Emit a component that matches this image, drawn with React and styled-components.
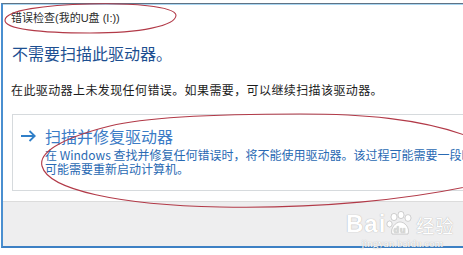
import styled, { createGlobalStyle } from 'styled-components';

const GlobalStyle = createGlobalStyle`
  html, body {
    margin: 0;
    padding: 0;
    background: #ffffff;
    overflow: hidden;
  }
  body {
    font-family: "Noto Sans", "Noto Sans CJK SC", sans-serif;
  }
`;

const Page = styled.div`
  position: relative;
  width: 463px;
  height: 255px;
  overflow: hidden;
  background: #ffffff;
`;

const Window = styled.div`
  margin: 3px 0 0 1px;
  width: 540px;
  height: 242px;
  display: flex;
  flex-direction: column;
  border-top: 1px solid #5f7386;
  border-left: 2px solid #4a8fd0;
  border-bottom: 2px solid #3d80c4;
  box-shadow: inset 0 1px 0 #a9d6f2;
  background: #ffffff;
`;

const Content = styled.div`
  flex: 1;
  display: flex;
  flex-direction: column;
  padding: 6px 0 0 8px;
`;

const Title = styled.div`
  font-size: 11px;
  line-height: 16px;
  color: #2a2a2a;
  font-family: "Liberation Sans", "Noto Sans CJK SC", sans-serif;
`;

const Heading = styled.div`
  margin-top: 16px;
  margin-left: 1px;
  font-size: 16px;
  line-height: 22px;
  color: #1d4f91;
  font-family: "Noto Sans CJK SC", sans-serif;
`;

const Body = styled.div`
  margin-top: 17px;
  font-size: 12px;
  line-height: 18px;
  letter-spacing: 0.4px;
  color: #1c1c1c;
  font-family: "Noto Sans CJK SC", sans-serif;
`;

const Card = styled.div`
  margin: 15px 0 0 1px;
  height: 77px;
  border: 1px solid #d6dadd;
  border-right: none;
  padding: 11px 0 0 7px;
  display: grid;
  grid-template-columns: 16px 1fr;
  column-gap: 9px;
  box-sizing: border-box;
`;

const ArrowBox = styled.div`
  height: 20px;
  display: flex;
  align-items: center;
`;

const CardText = styled.div`
  display: flex;
  flex-direction: column;
  font-family: "Noto Sans CJK SC", sans-serif;
`;

const CardTitle = styled.div`
  font-size: 16px;
  line-height: 20px;
  color: #3b7cc6;
`;

const CardLine = styled.div`
  font-size: 12px;
  line-height: 14px;
  color: #2a6ab3;
  white-space: nowrap;
  margin-top: ${(p) => (p.$first ? '2px' : '0')};
`;

const Footer = styled.div`
  height: 44px;
  border-top: 1px solid #dcdcdc;
  background: #eeeeef;
`;

const Marks = styled.svg`
  position: absolute;
  left: 0;
  top: 0;
  pointer-events: none;
`;

const Watermark = styled.div`
  position: absolute;
  left: 346px;
  top: 211px;
  display: flex;
  flex-direction: column;
  align-items: center;
  color: #ffffff;
  text-shadow: 0 0 1px rgba(90, 90, 90, 0.55);
`;

const WmRow = styled.div`
  display: flex;
  align-items: flex-end;
  font-family: "Liberation Sans", Arial, sans-serif;
  font-weight: bold;
  font-size: 24px;
  line-height: 26px;
  letter-spacing: 1px;
`;

const WmCjk = styled.span`
  font-family: "Noto Sans CJK SC", sans-serif;
  font-weight: normal;
  font-size: 18px;
  line-height: 24px;
  margin-left: 2px;
`;

const WmUrl = styled.div`
  font-family: "Liberation Serif", serif;
  font-size: 11px;
  line-height: 12px;
  margin-left: 4px;
`;

function Arrow() {
  return (
    <svg width="16" height="12" viewBox="0 0 16 12">
      <path d="M1 6 H14.5 M9.5 1 L14.8 6 L9.5 11" fill="none" stroke="#2f7fc8" strokeWidth="1.8" />
    </svg>
  );
}

function Paw() {
  return (
    <svg width="28" height="26" viewBox="0 0 28 26">
      <g fill="#ffffff" stroke="rgba(110,110,110,0.5)" strokeWidth="0.6">
        <ellipse cx="8" cy="6" rx="3" ry="3.6" />
        <ellipse cx="15" cy="4" rx="3" ry="3.6" />
        <ellipse cx="22" cy="7" rx="3" ry="3.4" />
        <ellipse cx="3.5" cy="13" rx="2.6" ry="3" />
        <path d="M6 23 C4 17 10 11 14 11 C19 11 24 17 22 23 Z" />
      </g>
      <text x="7.5" y="22" fontSize="9" fontFamily="Liberation Sans, Arial, sans-serif" fontWeight="bold" fill="#dcdcdc">du</text>
    </svg>
  );
}

export default function App() {
  return (
    <>
      <GlobalStyle />
      <Page>
        <Window>
          <Content>
            <Title>错误检查(我的U盘 (I:))</Title>
            <Heading>不需要扫描此驱动器。</Heading>
            <Body>在此驱动器上未发现任何错误。如果需要，可以继续扫描该驱动器。</Body>
            <Card>
              <ArrowBox>
                <Arrow />
              </ArrowBox>
              <CardText>
                <CardTitle>扫描并修复驱动器</CardTitle>
                <CardLine $first>在 Windows 查找并修复任何错误时，将不能使用驱动器。该过程可能需要一段时间，并且</CardLine>
                <CardLine>可能需要重新启动计算机。</CardLine>
              </CardText>
            </Card>
          </Content>
          <Footer />
        </Window>
        <Watermark>
          <WmRow>
            Bai
            <Paw />
            <WmCjk>经验</WmCjk>
          </WmRow>
          <WmUrl>jingyan.baidu.com</WmUrl>
        </Watermark>
        <Marks width="463" height="255" viewBox="0 0 463 255">
          <g fill="none" stroke="#b23a48" strokeWidth="1.1">
            <path d="M176 15 C174 6 130 3 90 4 C45 5 6 10 5 20 C4 29 40 33 90 33 C140 33 176 26 176 15 Z" />
            <path d="M470 137 C420 118 360 114 300 114 C230 114 150 116 110 126 C70 136 38 150 42 166 C48 190 120 205 220 207 C320 209 410 199 470 186" />
          </g>
        </Marks>
      </Page>
    </>
  );
}
